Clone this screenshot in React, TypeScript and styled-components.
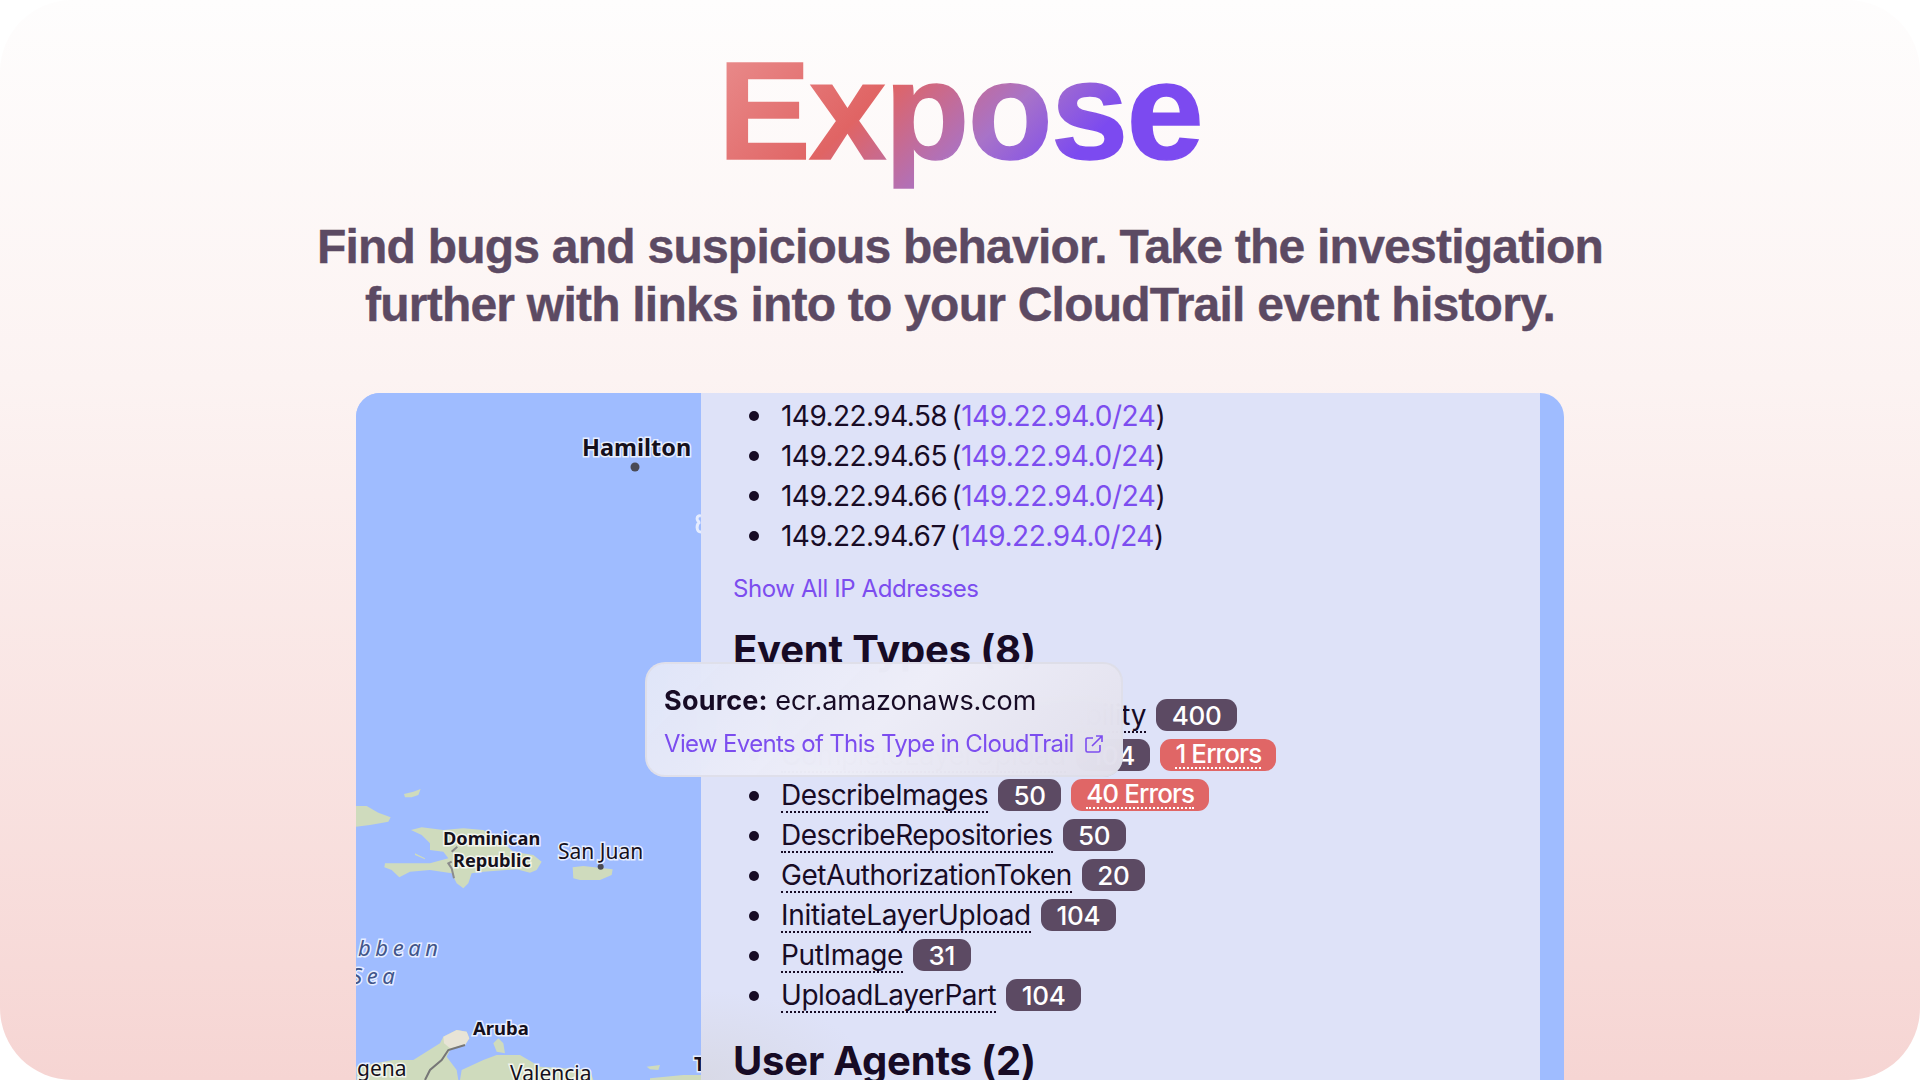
import React from "react";
import styled, { createGlobalStyle } from "styled-components";

const Global = createGlobalStyle`
  html, body { margin: 0; padding: 0; background: #fff; }
  #root { width: 1920px; height: 1080px; overflow: hidden; }
`;

const Slide = styled.div`
  width: 1920px;
  height: 1080px;
  border-radius: 72px;
  overflow: hidden;
  background: linear-gradient(180deg, #fefdfd 0%, #fcf3f2 35%, #f6d5d3 100%);
  display: flex;
  flex-direction: column;
  align-items: center;
`;

const Title = styled.h1`
  margin: 33px 0 0;
  font-family: "Liberation Sans", Arial, sans-serif;
  font-weight: 700;
  font-size: 139px;
  line-height: 156px;
  letter-spacing: -1.7px;
  -webkit-text-stroke: 1.5px transparent;
  background: linear-gradient(135deg, #ea9090 0%, #e06464 35%, #a873c8 58%, #7c4af0 75%, #7c4af0 100%);
  -webkit-background-clip: text;
  background-clip: text;
  color: transparent;
`;

const Subtitle = styled.p`
  margin: 29px 0 0;
  font-family: "Liberation Sans", Arial, sans-serif;
  font-weight: 700;
  font-size: 48px;
  line-height: 58px;
  letter-spacing: -0.77px;
  -webkit-text-stroke: 0.4px #5c4a63;
  text-align: center;
  color: #5c4a63;
`;

const Panel = styled.div`
  position: relative;
  margin-top: 59px;
  width: 1208px;
  flex: 1;
  display: flex;
  border-radius: 24px 24px 0 0;
  overflow: hidden;
  background: #9fbcff;
`;

const MapPane = styled.div`
  width: 345px;
  flex: none;
  svg { display: block; }
`;

const Content = styled.div`
  width: 839px;
  flex: none;
  background: radial-gradient(ellipse 170px 90px at 0% 100%, rgba(214, 214, 224, 0.75), transparent), #dee2f8;
  padding: 3px 0 0 32px;
  box-sizing: border-box;
  font-family: Inter, "Liberation Sans", sans-serif;
  color: #170b25;
`;

const List = styled.ul`
  list-style: none;
  margin: 0;
  padding: 0;
`;

const Item = styled.li`
  position: relative;
  height: 40px;
  padding-left: 48px;
  display: flex;
  align-items: center;
  gap: 10px;
  font-size: 28px;
  letter-spacing: -0.55px;
  white-space: nowrap;
  &::before {
    content: "";
    position: absolute;
    left: 16px;
    top: 15px;
    width: 10px;
    height: 10px;
    border-radius: 50%;
    background: #170b25;
  }
`;

const IpText = styled.span`
  word-spacing: -3px;
`;

const Link = styled.a`
  color: #7c4def;
  text-decoration: none;
  letter-spacing: -0.45px;
`;

const ShowAll = styled.a`
  display: block;
  margin-top: 16px;
  font-size: 24px;
  line-height: 34px;
  letter-spacing: -0.4px;
  color: #7c4def;
`;

const Heading = styled.h2`
  margin: 0;
  font-size: 40px;
  line-height: 46px;
  font-weight: 700;
  letter-spacing: -0.2px;
  color: #170b25;
`;

const EventHeading = styled(Heading)`
  margin: 21px 0 23px;
`;

const AgentHeading = styled(Heading)`
  margin-top: 22px;
`;

const EventName = styled.span<{ $tracking?: number }>`
  line-height: 32px;
  border-bottom: 2px dotted #170b25;
  letter-spacing: ${(p) => p.$tracking ?? -0.55}px;
`;

const Badge = styled.span<{ $error?: boolean }>`
  display: inline-flex;
  align-items: center;
  height: 32px;
  margin-top: -2px;
  padding: 0 ${(p) => (p.$error ? 15 : 15.5)}px;
  border-radius: 11px;
  font-size: 26px;
  font-weight: 500;
  letter-spacing: -0.3px;
  color: #fff;
  background: ${(p) => (p.$error ? "#e06666" : "#5c4a63")};
`;

const ErrorText = styled.span`
  line-height: 26px;
  border-bottom: 2px dotted #fff;
  letter-spacing: -0.9px;
`;

const Tooltip = styled.div`
  position: absolute;
  left: 289px;
  top: 269px;
  width: 478px;
  height: 115px;
  box-sizing: border-box;
  padding: 19px 17px;
  border-radius: 20px;
  border: 2px solid rgba(222, 222, 232, 0.9);
  background: linear-gradient(135deg, rgba(226, 230, 248, 0.96), rgba(238, 238, 248, 0.97) 50%, rgba(226, 224, 236, 0.97));
  backdrop-filter: blur(24px);
  font-family: Inter, "Liberation Sans", sans-serif;
  color: #170b25;
`;

const Source = styled.div`
  font-size: 27px;
  line-height: 36px;
  letter-spacing: -0.1px;
  white-space: nowrap;
  b { font-weight: 700; letter-spacing: 0.2px; }
`;

const TipLink = styled.div`
  display: flex;
  align-items: center;
  gap: 10px;
  margin-top: 10px;
  font-size: 24px;
  line-height: 30px;
  letter-spacing: -0.65px;
  color: #7c4def;
  white-space: nowrap;
  svg { flex: none; }
`;

const land = "#cfdbbd";

const MapText = styled.text<{ $w?: number; $s?: number }>`
  font-family: "Noto Sans", "Open Sans", sans-serif;
  font-size: ${(p) => p.$s ?? 20}px;
  font-weight: ${(p) => p.$w ?? 400};
  fill: #15101c;
  stroke: rgba(255, 255, 255, 0.75);
  stroke-width: 3px;
  paint-order: stroke;
`;

const SeaText = styled(MapText)`
  font-style: italic;
  fill: #41558a;
  letter-spacing: 4.6px;
`;

const WorldMap = () => (
  <svg width="345" height="687" viewBox="356 393 345 687">
    <rect x="356" y="393" width="345" height="687" fill="#9fbcff" />
    <path fill="none" stroke="#e6edff" strokeWidth="3" d="M701 516C696 514 696 522 700 522C696 524 696 532 701 532" />
    <g transform="translate(350 780) scale(0.33333)">
      <path fill={land} d="M18 78L50 78L85 98L122 112L115 125L60 135L18 140Z" />
      <path fill={land} d="M162 42L190 35L212 27L205 45L185 52L165 52Z" />
      <path fill={land} d="M183 150L215 142L280 150L340 145L400 150L450 180L490 215L550 225L575 245L560 270L540 278L500 268L400 275L365 280L355 310L340 325L320 310L305 280L240 270L180 275L148 292L125 270L103 262L105 250L150 250L240 250L295 235L280 215L240 210L240 190L215 165Z" />
      <path fill={land} d="M195 220L225 235L225 238L195 225Z" />
      <path fill={land} d="M668 262L700 258L760 265L788 268L785 285L750 300L690 300L670 295Z" />
      <path fill={land} d="M20 900L20 860L130 840L190 840L270 790L280 770L320 750L350 755L358 775L345 795L300 810L290 830L320 870L325 900Z" />
      <path fill={land} d="M335 870L400 840L440 825L510 825L570 860L720 870L730 900L330 900Z" />
      <path fill={land} d="M430 790L445 775L460 790L465 820L440 815Z" />
      <path fill={land} d="M890 860L930 855L925 870L900 868Z" />
      <path fill={land} d="M900 895L1000 885L1053 885L1053 900L900 900Z" />
      <path fill="#e8e4d6" d="M280 770L320 750L350 755L358 775L345 795L300 805L282 790Z" />
      <path fill="none" stroke="#8b8b8b" strokeWidth="6" d="M322 200L305 215M305 245L295 250L305 265L312 295" />
      <path fill="none" stroke="#777" strokeWidth="6" d="M345 795L295 810L275 840L240 870L225 900" />
      <circle cx="752" cy="260" r="9" fill="#4a4a55" />
    </g>
    <circle cx="635" cy="467" r="4.5" fill="#4a4a55" />
    <MapText x="582" y="456" $w={700} $s={23.5}>Hamilton</MapText>
    <MapText x="443" y="845" $w={700} $s={18.2}>Dominican</MapText>
    <MapText x="453" y="867" $w={700} $s={18.2}>Republic</MapText>
    <MapText x="558" y="859" $s={21}>San Juan</MapText>
    <SeaText x="358" y="956" $s={22}>bbean</SeaText>
    <SeaText x="351" y="984" $s={22}>Sea</SeaText>
    <MapText x="473" y="1035" $w={700} $s={18.5}>Aruba</MapText>
    <MapText x="357" y="1076" $s={21}>gena</MapText>
    <MapText x="510" y="1081" $s={21}>Valencia</MapText>
    <MapText x="694" y="1071" $w={700} $s={19}>T</MapText>
  </svg>
);

const ips = ["149.22.94.58", "149.22.94.65", "149.22.94.66", "149.22.94.67"];

const events: { name: string; count: number; errors?: number; tracking?: number }[] = [
  { name: "BatchCheckLayerAvailability", count: 400, tracking: -0.3 },
  { name: "CompleteLayerUpload", count: 104, errors: 1 },
  { name: "DescribeImages", count: 50, errors: 40 },
  { name: "DescribeRepositories", count: 50 },
  { name: "GetAuthorizationToken", count: 20, tracking: -0.5 },
  { name: "InitiateLayerUpload", count: 104, tracking: -0.3 },
  { name: "PutImage", count: 31, tracking: -0.35 },
  { name: "UploadLayerPart", count: 104, tracking: -0.45 },
];

const ExternalIcon = () => (
  <svg width="20" height="20" viewBox="0 0 20 20" fill="none" stroke="#7c4def" strokeWidth="1.6">
    <path d="M9 4H3.5A1.5 1.5 0 0 0 2 5.5V16.5A1.5 1.5 0 0 0 3.500 18H14.500A1.500 1.500 0 0 0 16 16.500V11" />
    <path d="M8 12L18 2M12 2H18V8" />
  </svg>
);

export default function App() {
  return (
    <>
      <Global />
      <Slide>
        <Title>Expose</Title>
        <Subtitle>
          Find bugs and suspicious behavior. Take the investigation
          <br />
          further with links into to your CloudTrail event history.
        </Subtitle>
        <Panel>
          <MapPane>
            <WorldMap />
          </MapPane>
          <Content>
            <List>
              {ips.map((ip) => (
                <Item key={ip}>
                  <IpText>
                    {ip} (<Link>149.22.94.0/24</Link>)
                  </IpText>
                </Item>
              ))}
            </List>
            <ShowAll>Show All IP Addresses</ShowAll>
            <EventHeading>Event Types (8)</EventHeading>
            <List>
              {events.map((e) => (
                <Item key={e.name}>
                  <EventName $tracking={e.tracking}>{e.name}</EventName>
                  <Badge>{e.count}</Badge>
                  {e.errors ? (
                    <Badge $error>
                      <ErrorText>{e.errors} Errors</ErrorText>
                    </Badge>
                  ) : null}
                </Item>
              ))}
            </List>
            <AgentHeading>User Agents (2)</AgentHeading>
          </Content>
          <Tooltip>
            <Source>
              <b>Source:</b> ecr.amazonaws.com
            </Source>
            <TipLink>
              View Events of This Type in CloudTrail
              <ExternalIcon />
            </TipLink>
          </Tooltip>
        </Panel>
      </Slide>
    </>
  );
}
